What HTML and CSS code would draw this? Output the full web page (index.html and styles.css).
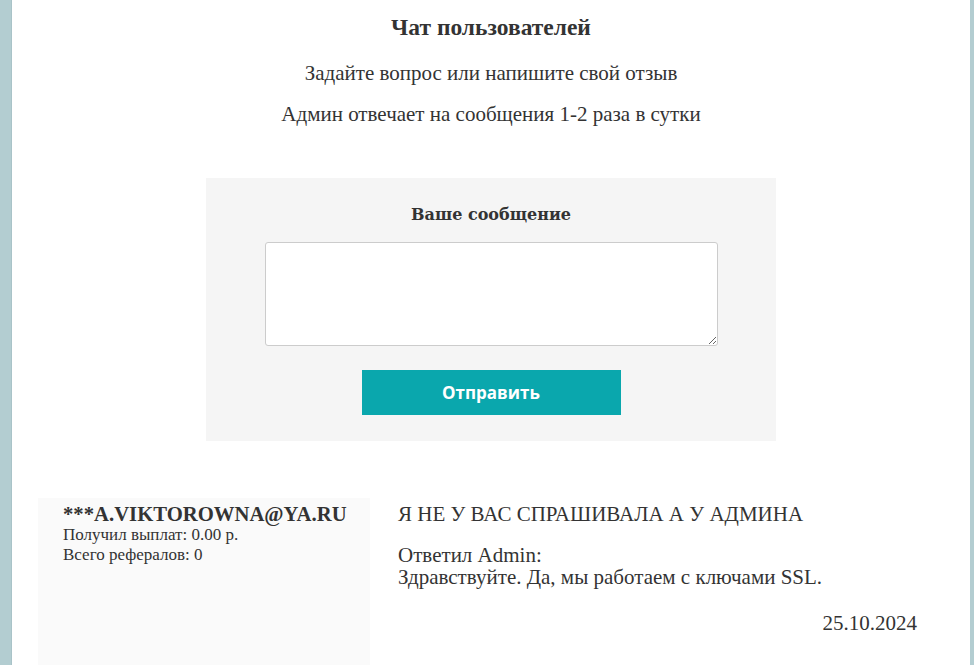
FILE: index.html
```html
<!DOCTYPE html>
<html lang="ru">
<head>
    <meta charset="UTF-8">
    <meta name="viewport" content="width=device-width, initial-scale=1.0">
    <title>Чат пользователей</title>
    <link rel="stylesheet" href="styles.css">
</head>
<body>
    <div class="page">
        <div class="chat-header">
            <h1>Чат пользователей</h1>
            <p>Задайте вопрос или напишите свой отзыв</p>
            <p>Админ отвечает на сообщения 1-2 раза в сутки</p>
        </div>

        <form class="chat-form" onsubmit="return false;">
            <h2>Ваше сообщение</h2>
            <textarea name="message"></textarea>
            <button type="submit" class="send-button">Отправить</button>
        </form>

        <div class="chat-list">
            <div class="chat-item">
                <div class="user-card">
                    <div class="user-name">***A.VIKTOROWNA@YA.RU</div>
                    <div class="user-stat">Получил выплат: 0.00 р.</div>
                    <div class="user-stat">Всего рефералов: 0</div>
                </div>
                <div class="message">
                    <p class="message-text">Я НЕ У ВАС СПРАШИВАЛА А У АДМИНА</p>
                    <p class="message-answer">Ответил Admin:<br>Здравствуйте. Да, мы работаем с ключами SSL.</p>
                    <div class="message-date">25.10.2024</div>
                </div>
            </div>
        </div>
    </div>
</body>
</html>
```

FILE: styles.css
```css
* {
    margin: 0;
    padding: 0;
    box-sizing: border-box;
}

html, body {
    height: 100%;
}

body {
    background: #b3cdd1;
    font-family: 'Liberation Serif', 'Times New Roman', serif;
    color: #333;
    overflow: hidden;
}

.page {
    margin: 0 4px 0 11px;
    min-height: 100%;
    background: #fff;
    border-left: 1px solid #a9c3c8;
}

.chat-header {
    text-align: center;
    padding-top: 13px;
}

.chat-header h1 {
    font-size: 23.5px;
    font-weight: bold;
    line-height: 28px;
    margin-bottom: 20px;
}

.chat-header p {
    font-size: 21px;
    line-height: 24px;
    margin-bottom: 17px;
}

.chat-form {
    width: 570px;
    margin: 52px auto 0;
    padding: 27px 0 26px;
    background: #f5f5f5;
    display: flex;
    flex-direction: column;
    align-items: center;
}

.chat-form h2 {
    font-family: 'DejaVu Serif', serif;
    font-size: 16px;
    font-weight: bold;
    line-height: 20px;
    margin-bottom: 17px;
}

.chat-form textarea {
    width: 453px;
    height: 104px;
    border: 1px solid #ccc;
    border-radius: 3px;
    background: #fff;
    resize: vertical;
    font-family: inherit;
    font-size: 16px;
    padding: 6px;
}

.send-button {
    width: 259px;
    height: 45px;
    margin-top: 24px;
    border: none;
    background: #0aa7ad;
    color: #fff;
    font-family: 'Open Sans', sans-serif;
    font-size: 17px;
    font-weight: bold;
    cursor: pointer;
}

.chat-list {
    margin-top: 57px;
}

.chat-item {
    display: flex;
    padding-left: 26px;
}

.user-card {
    width: 332px;
    min-height: 200px;
    background: #fafafa;
    padding: 5px 0 0 25px;
}

.user-name {
    font-size: 20.7px;
    font-weight: bold;
    line-height: 22px;
}

.user-stat {
    font-size: 17px;
    line-height: 20px;
}

.message {
    width: 547px;
    padding: 5px 0 0 28px;
    font-size: 21px;
    line-height: 22px;
}

.message-text {
    margin-bottom: 19px;
}

.message-date {
    text-align: right;
    margin-top: 24px;
}
```
